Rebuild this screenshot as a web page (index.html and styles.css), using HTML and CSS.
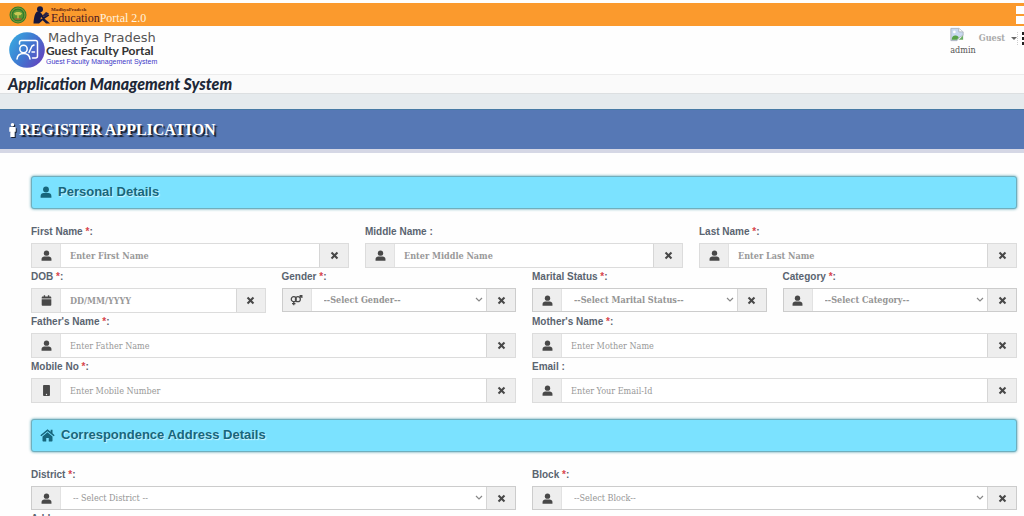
FILE: index.html
```html
<!DOCTYPE html>
<html lang="en">
<head>
<meta charset="utf-8">
<meta name="viewport" content="width=device-width, initial-scale=1">
<title>Register Application - Guest Faculty Portal</title>
<link rel="stylesheet" href="styles.css">
</head>
<body>
<svg class="sprite" aria-hidden="true">
  <symbol id="user" viewBox="0 0 16 16"><circle cx="8" cy="4.6" r="3.9"/><path d="M.8 15.5v-2.300c0-2.500 1.800-3.900 4-3.900h6.400c2.200 0 4 1.400 4 3.900v2.300z"/></symbol>
  <symbol id="times" viewBox="0 0 16 16"><path d="M4 1.500 8 5.300l4-3.800L14.600 4l-4 4 4 4-2.600 2.500-4-3.800-4 3.800L1.400 12l4-4-4-4z"/></symbol>
  <symbol id="calendar" viewBox="0 0 16 16"><path d="M1 5.200V4c0-1 .7-1.700 1.700-1.700H4V.5h2v1.800h4V.5h2v1.800h1.300c1 0 1.700.7 1.700 1.700v1.200zM1 6.200h14v8c0 1-.7 1.600-1.700 1.600H2.700c-1 0-1.700-.6-1.700-1.600z"/></symbol>
  <symbol id="gender" viewBox="0 0 18 16"><g fill="none" stroke="currentColor" stroke-width="1.800"><circle cx="5" cy="6" r="3.600"/><circle cx="11" cy="6" r="3.600"/><path d="M5 9.600V15M2.500 12.500h5M13.500 3.500 16.500 1M13.500 1h3.300v3.300"/></g></symbol>
  <symbol id="mobile" viewBox="0 0 16 16"><path fill-rule="evenodd" d="M4.500 0h7c.8 0 1.500.6 1.500 1.500v13c0 .9-.7 1.500-1.500 1.500h-7c-.8 0-1.500-.6-1.500-1.500v-13C3 .6 3.700 0 4.500 0zM8 12.800a1 1 0 1 0 0 2 1 1 0 0 0 0-2z"/></symbol>
  <symbol id="home" viewBox="0 0 18 16"><path d="M9 1 .4 8.200l1.200 1.400L9 3.400l7.400 6.200 1.200-1.400-2.600-2.200V1.800h-2.200v2.400z"/><path d="M9 4.800 3 9.800V15c0 .5.3.8.8.8h3.700v-4.300h3v4.300h3.700c.5 0 .8-.3.8-.8V9.800z"/></symbol>
</svg>

<header>
  <div class="topbar">
    <svg class="emblem" viewBox="0 0 18 18" aria-hidden="true"><circle cx="9" cy="9" r="8.500" fill="#2f7d2c"/><circle cx="9" cy="9" r="7" fill="none" stroke="#8d9b36" stroke-width="1"/><circle cx="9" cy="9" r="5.200" fill="#5a9433"/><path d="M5 7.500c1-2 7-2 8 0l-1.500 1.800H6.500zM8.300 8h1.400v5H8.300z" fill="#c9c855"/><path d="M5.500 13h7" stroke="#b3512c" stroke-width="1.200"/></svg>
    <svg class="reader" viewBox="0 0 18 18" aria-hidden="true"><circle cx="7" cy="3.300" r="3" fill="#17183f"/><path fill="#17183f" d="M3.500 6c2-1 4-.3 5 1.500l2.300 3.300 4.700-2.600.8 1.400-5.600 3.600L8 11l-.5 2.500 3-1.700 6.500 5.700h-4l-3.300-3.200L6 17.500H.5C.8 13 1.500 8 3.500 6z"/><path d="M9.500 9.500 13 6l3 1.500-4 3.500z" fill="#2b2449"/></svg>
    <div class="brand"><small>MadhyaPradesh</small><span><b>Education</b>Portal 2.0</span></div>
    <div class="tabs" aria-hidden="true"><i></i><i></i></div>
  </div>
  <div class="masthead">
    <svg class="logo" viewBox="0 0 36 36" aria-hidden="true"><defs><linearGradient id="disc" x1="0" y1="0.2" x2="1" y2="0.8"><stop offset="0" stop-color="#38a9e0"/><stop offset=".5" stop-color="#4077d0"/><stop offset="1" stop-color="#6540bd"/></linearGradient></defs><circle cx="18" cy="18" r="17.800" fill="url(#disc)"/><g fill="none" stroke="#fff" stroke-width="1.500" stroke-linecap="round" stroke-linejoin="round"><path d="M10.500 12V10.500c0-1.300.9-2 2-2h14c1.200 0 2 .8 2 2V24c0 1.200-.8 2-2 2h-3"/><circle cx="14.500" cy="17" r="3.700"/><path d="M8 27c.4-3.500 2.700-5.500 6.500-5.500S20.600 23.500 21 27M20 20.500 23 14l2-1M23 20h2.500"/></g></svg>
    <div class="title">
      <span class="state">Madhya Pradesh</span>
      <span class="portal">Guest Faculty Portal</span>
      <span class="system">Guest Faculty Management System</span>
    </div>
    <div class="account">
      <div class="avatar"><svg viewBox="0 0 16 16" aria-hidden="true"><path d="M1 1h9l5 4v4l-4 2-3 4H1z" fill="#c8d9f0" stroke="#aab1ba"/><path d="M10 1v4h5" fill="#fff" stroke="#aab1ba"/><path d="M2 13c1-4 4-5 8-2l-2 3H2z" fill="#57a349"/><circle cx="5" cy="5" r="1.500" fill="#fff"/><path d="m10 14 5-5v5z" fill="#6bad65"/></svg><span>admin</span></div>
      <button class="guest" type="button">Guest</button>
      <button class="more" type="button" aria-label="Menu"><i></i><i></i><i></i></button>
    </div>
  </div>
  <div class="appname">Application Management System</div>
</header>

<main>
  <div class="pagehead"><h1><svg viewBox="0 0 8 16" aria-hidden="true"><circle cx="4" cy="2" r="2"/><path d="M1.500 4.500h5c.8 0 1.200.5 1.200 1.200V10H6.500v6h-5v-6H.3V5.700c0-.7.4-1.200 1.200-1.200z"/></svg>REGISTER APPLICATION</h1></div>
  <form>
    <h2><svg aria-hidden="true"><use href="#user"/></svg>Personal Details</h2>
    <div class="row three">
      <div class="field"><label for="first">First Name <em>*</em>:</label><div class="group"><span class="addon"><svg aria-hidden="true"><use href="#user"/></svg></span><input class="strong" id="first" type="text" placeholder="Enter First Name"><button class="clear" type="button" aria-label="Clear first name"><svg><use href="#times"/></svg></button></div></div>
      <div class="field"><label for="middle">Middle Name :</label><div class="group"><span class="addon"><svg aria-hidden="true"><use href="#user"/></svg></span><input class="strong" id="middle" type="text" placeholder="Enter Middle Name"><button class="clear" type="button" aria-label="Clear middle name"><svg><use href="#times"/></svg></button></div></div>
      <div class="field"><label for="last">Last Name <em>*</em>:</label><div class="group"><span class="addon"><svg aria-hidden="true"><use href="#user"/></svg></span><input class="strong" id="last" type="text" placeholder="Enter Last Name"><button class="clear" type="button" aria-label="Clear last name"><svg><use href="#times"/></svg></button></div></div>
    </div>
    <div class="row four">
      <div class="field"><label for="dob">DOB <em>*</em>:</label><div class="group"><span class="addon"><svg aria-hidden="true"><use href="#calendar"/></svg></span><input class="strong" id="dob" type="text" placeholder="DD/MM/YYYY"><button class="clear" type="button" aria-label="Clear date of birth"><svg><use href="#times"/></svg></button></div></div>
      <div class="field"><label for="gender-select">Gender <em>*</em>:</label><div class="group short"><span class="addon"><svg class="wide" aria-hidden="true"><use href="#gender"/></svg></span><select class="strong" id="gender-select"><option>--Select Gender--</option></select><button class="clear" type="button" aria-label="Clear gender"><svg><use href="#times"/></svg></button></div></div>
      <div class="field"><label for="marital">Marital Status <em>*</em>:</label><div class="group short"><span class="addon"><svg aria-hidden="true"><use href="#user"/></svg></span><select class="strong" id="marital"><option>--Select Marital Status--</option></select><button class="clear" type="button" aria-label="Clear marital status"><svg><use href="#times"/></svg></button></div></div>
      <div class="field"><label for="category">Category <em>*</em>:</label><div class="group short"><span class="addon"><svg aria-hidden="true"><use href="#user"/></svg></span><select class="strong" id="category"><option>--Select Category--</option></select><button class="clear" type="button" aria-label="Clear category"><svg><use href="#times"/></svg></button></div></div>
    </div>
    <div class="row two">
      <div class="field"><label for="father">Father's Name <em>*</em>:</label><div class="group"><span class="addon"><svg aria-hidden="true"><use href="#user"/></svg></span><input id="father" type="text" placeholder="Enter Father Name"><button class="clear" type="button" aria-label="Clear father's name"><svg><use href="#times"/></svg></button></div></div>
      <div class="field"><label for="mother">Mother's Name <em>*</em>:</label><div class="group"><span class="addon"><svg aria-hidden="true"><use href="#user"/></svg></span><input id="mother" type="text" placeholder="Enter Mother Name"><button class="clear" type="button" aria-label="Clear mother's name"><svg><use href="#times"/></svg></button></div></div>
      <div class="field"><label for="phone">Mobile No <em>*</em>:</label><div class="group"><span class="addon"><svg aria-hidden="true"><use href="#mobile"/></svg></span><input id="phone" type="tel" placeholder="Enter Mobile Number"><button class="clear" type="button" aria-label="Clear mobile number"><svg><use href="#times"/></svg></button></div></div>
      <div class="field"><label for="email">Email :</label><div class="group"><span class="addon"><svg aria-hidden="true"><use href="#user"/></svg></span><input id="email" type="email" placeholder="Enter Your Email-Id"><button class="clear" type="button" aria-label="Clear email"><svg><use href="#times"/></svg></button></div></div>
    </div>
    <h2><svg class="wide" aria-hidden="true"><use href="#home"/></svg>Correspondence Address Details</h2>
    <div class="row two">
      <div class="field"><label for="district">District <em>*</em>:</label><div class="group short"><span class="addon"><svg aria-hidden="true"><use href="#user"/></svg></span><select id="district"><option>-- Select District --</option></select><button class="clear" type="button" aria-label="Clear district"><svg><use href="#times"/></svg></button></div></div>
      <div class="field"><label for="block">Block <em>*</em>:</label><div class="group short"><span class="addon"><svg aria-hidden="true"><use href="#user"/></svg></span><select id="block"><option>--Select Block--</option></select><button class="clear" type="button" aria-label="Clear block"><svg><use href="#times"/></svg></button></div></div>
    </div>
    <div class="field last"><span>Address</span></div>
  </form>
</main>
</body>
</html>
```
FILE: styles.css
```css
* { box-sizing: border-box; }
html { scrollbar-width: none; }
body { margin: 0; background: #fefefe; font-family: "Liberation Sans", Arial, sans-serif; color: #5a6470; }
.sprite { position: absolute; width: 0; height: 0; }
svg { display: block; fill: currentColor; flex: none; }
button { font: inherit; color: inherit; background: none; border: 0; padding: 0; }

.topbar { display: flex; align-items: center; height: 23px; margin-top: 3px; padding-left: 9px; background: #fb9a2d; }
.emblem { width: 18px; height: 18px; margin-right: 6px; }
.reader { width: 18px; height: 18px; }
.brand { padding-top: 2px; font-family: "Liberation Serif", serif; font-size: 12px; line-height: 12px; color: #fff3df; }
.brand small { display: block; font-size: 5px; line-height: 5px; font-weight: bold; color: #5e2412; }
.brand span { display: block; }
.brand b { font-weight: normal; color: #4c1824; }
.tabs { display: grid; gap: 2px; width: 8px; margin-left: auto; }
.tabs i { height: 8px; background: #fff; }

.masthead { display: flex; align-items: flex-start; height: 48px; padding: 6px 0 0 9px; }
.logo { width: 36px; height: 36px; }
.title { display: flex; flex-direction: column; padding-left: 1px; }
.state { padding-left: 2px; font-family: "DejaVu Sans", sans-serif; font-size: 13px; line-height: 11px; color: #555; }
.portal { font-family: Lato, sans-serif; font-size: 12px; line-height: 15px; font-weight: bold; color: #333; }
.system { font-size: 7px; line-height: 8px; color: #4038c8; }
.account { display: flex; align-items: flex-start; margin-left: auto; font-family: "DejaVu Serif Condensed", "DejaVu Serif", serif; }
.avatar { margin: -5px 3px 0 0; font-size: 9px; line-height: 14px; color: #555; }
.avatar svg { width: 14px; height: 15px; margin-bottom: 1px; }
.guest { display: flex; align-items: center; gap: 6px; height: 12px; font-size: 9px; font-weight: bold; color: #aaa; }
.guest::after { content: ""; border: 3px solid transparent; border-top-color: #666; border-bottom: 0; }
.more { display: grid; gap: 2px; width: 7px; padding-left: 4px; border-left: 1px dotted #ccc; }
.more i { height: 3px; background: #222; }
.appname { height: 20px; padding-left: 8px; border-top: 1px solid #ececec; border-bottom: 1px solid #dcdfe1; background: #fafafa; font-family: Lato, sans-serif; font-size: 16px; line-height: 17px; font-weight: 900; font-style: italic; color: #202838; }

main { padding-top: 15px; background: #e5eaed; }
.pagehead { border-top: 1px solid #477aa5; border-bottom: 4px solid #d5d7e5; background: #5678b5; }
h1 { display: flex; align-items: center; gap: 3px; height: 39px; margin: 0; padding-left: 9px; font-family: "Liberation Serif", serif; font-size: 16px; color: #fff; text-shadow: 2px 2px 1px #18202e; }
h1 svg { width: 7px; height: 16px; filter: drop-shadow(1px 1px 0 #18202e); }
form { padding: 23px 7px 0 31px; background: #fefefe; }
h2 { display: flex; align-items: center; gap: 6px; height: 33px; margin: 0 0 14px; padding: 0 8px 2px; border: 1px solid #70aebd; border-radius: 3px; background: #7be2ff; box-shadow: 0 0 3px #4b9aaa; font-size: 13px; color: #17667c; text-shadow: 1px 1px 1px #d7f5ff; }
h2 svg { width: 12px; height: 14px; }
h2 svg.wide { width: 15px; height: 14px; }
.row { display: grid; column-gap: 16px; }
.row + h2 { margin-top: 16px; }
.three { grid-template-columns: repeat(3, 1fr); }
.four { grid-template-columns: repeat(4, 1fr); }
.two { grid-template-columns: repeat(2, 1fr); }
.field { display: flex; flex-direction: column; font-size: 10px; font-weight: bold; line-height: 18px; }
.field label { height: 20px; }
.field em { font-style: normal; color: #d8454d; }
.last { height: 20px; }
.group { display: flex; height: 25px; border: 1px solid #dcdcdc; background: #fff; }
.short { height: 24px; border-color: #ccc; }
.addon, .clear { display: flex; flex: none; align-items: center; justify-content: center; width: 29px; background: #eee; color: #484848; }
.addon { border-right: 1px solid #e2e2e2; }
.clear { border-left: 1px solid #d6d6d6; }
.group svg { width: 11px; height: 11px; }
.clear svg { width: 9px; height: 9px; }
.group svg.wide { width: 13px; height: 11px; }
input, select { flex: 1; min-width: 0; border: 0; padding: 0 9px; background: #fff; font-family: "DejaVu Serif Condensed", "DejaVu Serif", serif; font-size: 9px; color: #959595; border-radius: 0; }
input::placeholder { color: #999; opacity: 1; }
.strong { font-weight: bold; }
select { appearance: none; padding: 0 12px; background-image: url("data:image/svg+xml,%3Csvg xmlns='http://www.w3.org/2000/svg' viewBox='0 0 8 6'%3E%3Cpath d='M1 1l3 3 3-3' fill='none' stroke='%23888' stroke-width='1.200'/%3E%3C/svg%3E"); background-repeat: no-repeat; background-position: right 3px center; background-size: 8px 6px; }
```
